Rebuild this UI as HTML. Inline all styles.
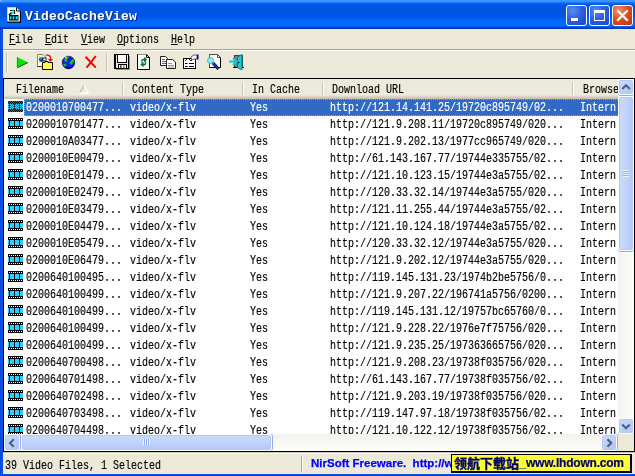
<!DOCTYPE html>
<html lang="en"><head><meta charset="utf-8"><title>VideoCacheView</title>
<style>
html,body{margin:0;padding:0;}
body{width:635px;height:476px;overflow:hidden;background:#ece9d8;font-family:"Liberation Mono","Noto Sans CJK SC",monospace;font-size:12px;line-height:12px;color:#000;}
i{-webkit-text-stroke:.15px currentColor;font-style:normal;display:inline-block;white-space:nowrap;transform:scaleX(.8333);transform-origin:0 50%;}
u{text-decoration:none;position:relative;}u:after{content:'';position:absolute;left:0;right:-1px;top:11px;height:1px;background:#000;}
#win{will-change:transform;position:absolute;left:0;top:0;width:635px;height:476px;overflow:hidden;background:#ece9d8;}
#title{position:absolute;left:0;top:0;width:635px;height:29px;
background:linear-gradient(to bottom,#3d96ff 0.5px,#3a92fe 1.5px,#1878fb 2.5px,#0866f2 3.5px,#015ae8 4.5px,#0055e3 5.5px,#0055e3 6.5px,#0055e3 7.5px,#0055e3 8.5px,#0055e3 9.5px,#0055e3 10.5px,#0055e3 11.5px,#0055e3 12.5px,#0055e3 13.5px,#0055e3 14.5px,#0055e3 15.5px,#0057e6 16.5px,#005aec 17.5px,#005ef2 18.5px,#0062f7 19.5px,#0265fa 20.5px,#0468fd 21.5px,#0468fd 22.5px,#0468fd 23.5px,#0468fd 24.5px,#0468fd 25.5px,#025fee 26.5px,#0148cc 27.5px,#0036b0 28.5px);}
#appicon{position:absolute;left:7px;top:7px;}
#ttext{-webkit-text-stroke:.45px #fff;position:absolute;left:25px;top:10px;font-weight:bold;font-size:13px;line-height:13px;color:#fff;text-shadow:1px 1px 0 #0a2a80;}
#ttext i{-webkit-text-stroke:0;transform:none;letter-spacing:.2px;}
.tb{position:absolute;top:5px;width:21px;height:21px;box-sizing:border-box;border:1px solid #fff;border-radius:3px;
background:radial-gradient(circle at 30% 25%,#5a8cf0 0%,#2d5fe0 45%,#1a48c8 100%);}
.tb.min{left:566px}.tb.max{left:589px}.tb.close{left:612px;background:radial-gradient(circle at 30% 25%,#f0906a 0%,#dc4a22 50%,#b83210 100%);}
.tb.min b{position:absolute;left:4px;top:12px;width:7px;height:3px;background:#fff;}
.tb.max b{position:absolute;left:4px;top:4px;width:9px;height:7px;border:1px solid #fff;border-top-width:3px;}
.tb svg{position:absolute;left:-1px;top:-1px;}
#menu{position:absolute;left:3px;top:29px;width:632px;height:20px;}
#menu span{position:absolute;top:5px;}
#menu span{margin-left:-3px;}
#etch{position:absolute;left:3px;top:49px;width:632px;height:1px;background:#aca899;border-bottom:1px solid #fff;}
#toolbar{position:absolute;left:0;top:51px;width:635px;height:27px;}
#toolbar .grip{position:absolute;left:6px;top:2px;width:1px;height:19px;background:#c2bfae;border-right:1px solid #f8f7f0;}
#toolbar .sep{position:absolute;left:106px;top:2px;width:1px;height:19px;background:#c5c2b2;border-right:1px solid #f8f7f0;}
#toolbar svg.ic{position:absolute;top:3px;}
#list{position:absolute;left:3px;top:78px;width:630px;height:372px;border:1px solid #000;background:#fff;overflow:hidden;}
#header{position:absolute;left:0;top:0;width:630px;height:20px;background:linear-gradient(to bottom,#ebeadb 0,#ebeadb 16px,#e2dece 17px,#d6d2c2 18px,#cbc7b8 19px,#c5c1b0 20px);}
#header .h{position:absolute;top:5px;}
#header .hs{position:absolute;top:3px;width:1px;height:13px;background:#c7c5b2;border-right:1px solid #fff;}
#sort{position:absolute;left:75px;top:6px;}
#rows{position:absolute;left:0;top:0;width:614px;height:355px;overflow:hidden;}
.row{position:absolute;left:0;width:614px;height:17px;}
.film{position:absolute;left:4px;top:2px;width:15px;height:11px;background:linear-gradient(#000,#000) 1px 3px/1px 5px no-repeat,linear-gradient(#000,#000) 6px 3px/1px 5px no-repeat,linear-gradient(#000,#000) 11px 3px/1px 5px no-repeat,linear-gradient(#33ccff,#33ccff) 0 3px/15px 5px no-repeat,repeating-linear-gradient(to right,#000 0,#000 1px,#fff 1px,#fff 2px) 0 1px/14px 1px no-repeat,repeating-linear-gradient(to right,#000 0,#000 1px,#fff 1px,#fff 2px) 0 9px/14px 1px no-repeat,#000;}
.c{position:absolute;top:3px;height:13px;overflow:hidden;}
.c1{left:22px;width:96px}.c2{left:126px}.c3{left:246px}.c4{left:326px;width:240px}.c5{left:576px;width:36px}
.row.sel{color:#fff;}
.row.sel:before{content:"";position:absolute;left:20px;top:0;width:594px;height:17px;box-sizing:border-box;background:#316ac5;border:1px dotted #d8993a;border-right:0;}
.row.sel:after{content:'';position:absolute;left:4px;top:2px;width:15px;height:11px;background-image:conic-gradient(#316ac5 25%,transparent 0 50%,#316ac5 0 75%,transparent 0);background-size:2px 2px;background-position:1px 0;}
#vs{position:absolute;left:614px;top:0;width:16px;height:355px;background:linear-gradient(to right,#f3f1ec,#fefefb);}
#hs{position:absolute;left:0;top:355px;width:614px;height:17px;background:linear-gradient(to bottom,#f3f1ec,#fefefb);}
#corner{position:absolute;left:614px;top:355px;width:16px;height:17px;background:#ece9d8;}
.sb{position:absolute;width:16px;height:16px;box-sizing:border-box;border:1px solid #fff;border-radius:3px;background:linear-gradient(135deg,#cadbfd 0%,#bdd0fb 50%,#aec4f8 100%);box-shadow:inset 0 0 0 1px #b4c8f6;}
.sb svg{position:absolute;left:-1px;top:-1px;}
.sb.up{left:0;top:0;box-shadow:inset 0 0 0 1px #b4c8f6,0 1px 0 #86a7e8}.sb.down{left:0;top:339px}
.sb.left{left:0;top:0;height:17px}.sb.right{left:597px;top:0;height:17px}.sb.left svg,.sb.right svg{top:-.5px}
.thumb{position:absolute;box-sizing:border-box;border:1px solid #fff;border-radius:3px;box-shadow:inset 0 0 0 1px #b4c8f6;}
.thumb.v{left:0;top:17px;width:16px;height:155px;background:linear-gradient(to right,#cbdafd 0%,#c2d3fc 50%,#b3c8f8 100%);}
.thumb.h{left:17px;top:0;width:251px;height:17px;background:linear-gradient(to bottom,#cbdafd 0%,#c2d3fc 50%,#b3c8f8 100%);}
.thumb.v .gr{position:absolute;left:4px;top:73px;width:6px;height:7px;background:repeating-linear-gradient(to bottom,#eef4fe 0,#eef4fe 1px,#8cb0f8 1px,#8cb0f8 2px);}
.thumb.h .gr{position:absolute;top:4px;left:121px;height:6px;width:7px;background:repeating-linear-gradient(to right,#eef4fe 0,#eef4fe 1px,#8cb0f8 1px,#8cb0f8 2px);}
#status{position:absolute;left:3px;top:452px;width:632px;height:22px;background:linear-gradient(to bottom,#c9c6b5 0,#c9c6b5 1px,#f8f7f1 1px,#f8f7f1 2px,#ece9d8 2px);}
#st1{position:absolute;left:2px;top:8px;}
#stsep{position:absolute;left:298px;top:4px;width:1px;height:16px;background:#aca899;border-right:1px solid #fff;}
#st2{-webkit-text-stroke:.25px #0000ff;position:absolute;left:308px;top:4px;font-family:"Liberation Sans",sans-serif;font-weight:bold;font-size:11.5px;line-height:14px;color:#0000ff;white-space:nowrap;}
#wm{position:absolute;left:451px;top:454px;width:181px;height:19px;box-sizing:border-box;border:1px solid #000;border-right-width:2px;border-bottom-width:2px;background:#ffff33;white-space:nowrap;overflow:hidden;font-weight:bold;}
#wm .cn{-webkit-text-stroke:.35px #00006a;position:absolute;left:2px;top:1px;font-family:"Liberation Sans","Noto Sans CJK SC",sans-serif;font-size:13px;line-height:15px;color:#00006a;}
#wm .en{-webkit-text-stroke:.2px #00006a;position:absolute;left:67.5px;top:1px;font-family:"Liberation Sans",sans-serif;font-size:12px;line-height:15px;letter-spacing:-.22px;color:#00006a;}
#bl{position:absolute;left:0;top:29px;width:3px;height:447px;background:linear-gradient(to right,#0a3edc,#0855e8 50%,#0450d8);}
#bb{position:absolute;left:0;top:474px;width:635px;height:2px;background:linear-gradient(to bottom,#0450d8,#0855e8 40%,#0338b8);}
#tl{position:absolute;left:0;top:0;width:2px;height:2px;background:radial-gradient(circle at 0 0,#9fc4ff 0,#5a9cff 70%,transparent 100%);}
#vs .sb,#vs .thumb{box-shadow:inset 0 0 0 1px #b4c8f6,0 1px 0 #8eabea;}
#hs .sb,#hs .thumb{box-shadow:inset 0 0 0 1px #b4c8f6,1px 0 0 #8eabea;}

</style></head>
<body>
<div id="win">
<div id="title">
  <svg id="appicon" width="14" height="16" viewBox="0 0 14 16">
    <path d="M0.5 0.5H9.5L13 4V15H0.5Z" fill="#fff"/>
    <path d="M0.5 15V0.5H9.5" fill="none" stroke="#d9cfa4"/>
    <path d="M0 15.2H13.5V4" fill="none" stroke="#000" stroke-width="1.2"/>
    <path d="M9.5 0.5V4H13.2" fill="none" stroke="#000"/>
    <path d="M3 3.5H7.5V7" fill="none" stroke="#000" stroke-width="1.2"/>
    <path d="M7 3.8L3.8 8" stroke="#00e8f0" stroke-width="1.8"/>
    <path d="M4.5 3H7" stroke="#00e8f0" stroke-width="1"/>
    <rect x="2" y="8" width="9.5" height="5.5" fill="#000"/>
    <rect x="2.8" y="9.3" width="1.7" height="3" fill="#00e8f0"/><rect x="5.6" y="9.3" width="1.8" height="3" fill="#00e8f0"/><rect x="8.6" y="9.3" width="2.2" height="3" fill="#00e8f0"/>
    <path d="M2 8L4.5 5.5" stroke="#000" stroke-width="1.2"/>
  </svg>
  <span id="ttext"><i>VideoCacheView</i></span>
  <div class="tb min"><b></b></div>
  <div class="tb max"><b></b></div>
  <div class="tb close"><svg width="21" height="21" viewBox="0 0 21 21"><path d="M6 6L15 15M15 6L6 15" stroke="#fff" stroke-width="2.2" stroke-linecap="square"/></svg></div>
</div>
<div id="menu">
  <span style="left:9px"><i><u>F</u>ile</i></span>
  <span style="left:45px"><i><u>E</u>dit</i></span>
  <span style="left:81px"><i><u>V</u>iew</i></span>
  <span style="left:117px"><i><u>O</u>ptions</i></span>
  <span style="left:171px"><i><u>H</u>elp</i></span>
</div>
<div id="etch"></div>
<div id="toolbar">
  <div class="grip"></div>
  <div class="sep"></div>
  <svg class="ic" style="left:14px" width="16" height="16" viewBox="0 0 16 16"><path d="M3 3L14 8.5L3 14Z" fill="#00e400"/><path d="M3.2 13.8L14 8.5" stroke="#045a04" stroke-width="1" fill="none"/><path d="M3.4 3.2V13.8" stroke="#12a012" stroke-width="1" fill="none"/></svg>
  <svg class="ic" style="left:37px" width="16" height="16" viewBox="0 0 16 16"><path d="M0.5 0.5H6L8.5 3V12.5H0.5Z" fill="#fff" stroke="#808080"/><path d="M0 12.5H6" stroke="#404040"/><g fill="#e8d800"><rect x="2" y="2" width="1" height="1"/><rect x="5" y="1.5" width="1" height="1"/><rect x="1.5" y="8" width="1" height="1"/><rect x="3.5" y="10" width="1" height="1"/><rect x="6" y="9" width="1" height="1"/></g><circle cx="4.3" cy="5.6" r="2.4" fill="#1030d0"/><path d="M2.5 4.5L4.8 3.4L5.5 5L4 6.2Z" fill="#20b020"/><rect x="6" y="4" width="3" height="3" fill="#fff" stroke="#000" stroke-width=".8"/><path d="M9 1.2C12.5 0.5 14 2.5 13.5 6" stroke="#ff0000" stroke-width="1.3" fill="none"/><path d="M11 5H16L13.5 8Z" fill="#ff0000"/><path d="M5.5 8.5H8V7.5H11V8.5H15.5V15.5H5.5Z" fill="#ffff50" stroke="#000"/></svg>
  <svg class="ic" style="left:60px" width="16" height="16" viewBox="0 0 16 16"><circle cx="8.5" cy="8.5" r="6.3" fill="#0a18e8" stroke="#202050" stroke-width=".8"/><path d="M4 5.5L6.5 3L9.5 3.2L7 5.5L7.5 7.5L5 8Z" fill="#18c018"/><path d="M9 9L13 4.5L14.3 7L11.5 11Z" fill="#18c018"/><path d="M3 10L6 9.5L6.5 12L4.5 12.8Z" fill="#18c018"/><path d="M5 3.8L6.8 2.8" stroke="#fff" stroke-width="1"/><path d="M3.6 12.3A6.3 6.3 0 0 0 13.4 12.3Q8.5 14 3.6 12.3Z" fill="#000060"/></svg>
  <svg class="ic" style="left:83px" width="16" height="16" viewBox="0 0 16 16"><path d="M2.5 2.8L12.8 13.6M12.8 2L3.6 13.6" stroke="#ff0000" stroke-width="2" fill="none"/></svg>
  <svg class="ic" style="left:114px" width="16" height="16" viewBox="0 0 16 16"><path d="M15.5 2V15.5H2" stroke="#909090" fill="none"/><rect x="0.5" y="0.5" width="14" height="14" fill="#ece9d8" stroke="#000"/><path d="M1.5 1V14" stroke="#000"/><rect x="3.5" y="0.5" width="9" height="8" fill="#fff" stroke="#000" stroke-width="1"/><rect x="13" y="1.5" width="1" height="1" fill="#fff"/><rect x="4.5" y="10.5" width="8" height="4" fill="#f4f2e8" stroke="#000"/><rect x="6" y="11.2" width="1.6" height="3" fill="#505050"/><rect x="9" y="11.2" width="1.6" height="3" fill="#909090"/></svg>
  <svg class="ic" style="left:137px" width="16" height="16" viewBox="0 0 16 16"><path d="M0.5 0.5H9.5L12.5 3.5V15.5H0.5Z" fill="#fff" stroke="#000"/><path d="M1 0.5H9.5" stroke="#909090"/><path d="M9.5 0.5V3.5H12.5" fill="none" stroke="#000"/><path d="M4.2 7.2C4.2 5.2 5.5 4.6 7 4.8V3L10.2 5.6L7 8.2V6.4C6 6.2 5.6 6.6 5.6 7.6Z" fill="#087808"/><path d="M9.3 9C9.3 11 8 11.6 6.5 11.4V13.2L3.3 10.6L6.5 8V9.8C7.5 10 7.9 9.6 7.9 8.6Z" fill="#087808"/><path d="M4.9 7.4V9.2M8.6 8.8V7" stroke="#1088b8" stroke-width="1.4"/></svg>
  <svg class="ic" style="left:160px" width="16" height="16" viewBox="0 0 16 16"><path d="M0.5 2.5H5.5L7.5 4.5V11.5H0.5Z" fill="#fff" stroke="#202020"/><path d="M2 5.5H5M2 7.5H6M2 9.5H6" stroke="#505050" stroke-width=".9"/><path d="M6.5 5.5H12.5L15.5 8V14.5H6.5Z" fill="#fff" stroke="#202020"/><path d="M8 9.5H12M8 11.5H14M8 13H14" stroke="#909090" stroke-width=".9"/></svg>
  <svg class="ic" style="left:183px" width="16" height="16" viewBox="0 0 16 16"><rect x="0.5" y="4.5" width="12" height="10" fill="#fff" stroke="#000"/><path d="M2 7L5 4L8 7L11 3" stroke="#000" stroke-width=".9" fill="none"/><path d="M8 3L11 1H14V5H11L8.5 6Z" fill="#fff" stroke="#404040" stroke-width=".8"/><rect x="14" y="0.5" width="1.5" height="5" fill="#0000c0"/><path d="M2 9.5H4.5M6 9.5H11M2 12.5H4.5M6 12.5H11" stroke="#000" stroke-width="1"/></svg>
  <svg class="ic" style="left:206px" width="16" height="16" viewBox="0 0 16 16"><path d="M3.5 0.5H11.5L14.5 3.5V13.5H3.5Z" fill="#fff" stroke="#505050"/><path d="M14.5 3.5V13.5H3.5" stroke="#000" fill="none"/><path d="M11.5 0.5V3.5H14.5" stroke="#505050" fill="none"/><circle cx="4.5" cy="6.5" r="3" fill="#80f0ff" stroke="#40a0c0" stroke-width=".8"/><path d="M7 9L12.5 15" stroke="#000" stroke-width="3"/><path d="M7 9L12.3 14.7" stroke="#0040ff" stroke-width="1.6"/></svg>
  <svg class="ic" style="left:229px" width="16" height="16" viewBox="0 0 16 16"><rect x="5.5" y="1.5" width="8" height="12" fill="#808080" stroke="#404040"/><path d="M4 13.5H15" stroke="#000"/><path d="M8.5 3L13 0.5V16L8.5 13.5Z" fill="#10d0d0" stroke="#006868" stroke-width=".8"/><path d="M0 7.5H7" stroke="#10c8d8" stroke-width="2"/><path d="M4 4L7.8 7.5L4 11" stroke="#10c8d8" stroke-width="2" fill="none"/><circle cx="9.8" cy="8.5" r=".8" fill="#000"/></svg>

</div>
<div id="list">
  <div id="header">
    <span class="h" style="left:12px"><i>Filename</i></span>
    <svg id="sort" width="10" height="9" viewBox="0 0 10 9"><path d="M5 0.5L0.7 8" stroke="#aca899" fill="none"/><path d="M5 0.5L9.3 8.2H0.5" stroke="#fff" stroke-width="1.4" fill="none"/></svg>
    <span class="h" style="left:128px"><i>Content Type</i></span>
    <span class="h" style="left:248px"><i>In Cache</i></span>
    <span class="h" style="left:328px"><i>Download URL</i></span>
    <span class="h" style="left:579px"><i>Browse</i></span>
    <div class="hs" style="left:118px"></div>
    <div class="hs" style="left:238px"></div>
    <div class="hs" style="left:318px"></div>
    <div class="hs" style="left:568px"></div>
  </div>
  <div id="rows">
<div class="row sel" style="top:20px"><b class="film"></b><span class="c c1"><i>0200010700477...</i></span><span class="c c2"><i>video/x-flv</i></span><span class="c c3"><i>Yes</i></span><span class="c c4"><i>http://121.14.141.25/19720c895749/02...</i></span><span class="c c5"><i>Intern</i></span></div>
<div class="row" style="top:37px"><b class="film"></b><span class="c c1"><i>0200010701477...</i></span><span class="c c2"><i>video/x-flv</i></span><span class="c c3"><i>Yes</i></span><span class="c c4"><i>http://121.9.208.11/19720c895749/020...</i></span><span class="c c5"><i>Intern</i></span></div>
<div class="row" style="top:54px"><b class="film"></b><span class="c c1"><i>0200010A03477...</i></span><span class="c c2"><i>video/x-flv</i></span><span class="c c3"><i>Yes</i></span><span class="c c4"><i>http://121.9.202.13/1977cc965749/020...</i></span><span class="c c5"><i>Intern</i></span></div>
<div class="row" style="top:71px"><b class="film"></b><span class="c c1"><i>0200010E00479...</i></span><span class="c c2"><i>video/x-flv</i></span><span class="c c3"><i>Yes</i></span><span class="c c4"><i>http://61.143.167.77/19744e335755/02...</i></span><span class="c c5"><i>Intern</i></span></div>
<div class="row" style="top:88px"><b class="film"></b><span class="c c1"><i>0200010E01479...</i></span><span class="c c2"><i>video/x-flv</i></span><span class="c c3"><i>Yes</i></span><span class="c c4"><i>http://121.10.123.15/19744e3a5755/02...</i></span><span class="c c5"><i>Intern</i></span></div>
<div class="row" style="top:105px"><b class="film"></b><span class="c c1"><i>0200010E02479...</i></span><span class="c c2"><i>video/x-flv</i></span><span class="c c3"><i>Yes</i></span><span class="c c4"><i>http://120.33.32.14/19744e3a5755/020...</i></span><span class="c c5"><i>Intern</i></span></div>
<div class="row" style="top:122px"><b class="film"></b><span class="c c1"><i>0200010E03479...</i></span><span class="c c2"><i>video/x-flv</i></span><span class="c c3"><i>Yes</i></span><span class="c c4"><i>http://121.11.255.44/19744e3a5755/02...</i></span><span class="c c5"><i>Intern</i></span></div>
<div class="row" style="top:139px"><b class="film"></b><span class="c c1"><i>0200010E04479...</i></span><span class="c c2"><i>video/x-flv</i></span><span class="c c3"><i>Yes</i></span><span class="c c4"><i>http://121.10.124.18/19744e3a5755/02...</i></span><span class="c c5"><i>Intern</i></span></div>
<div class="row" style="top:156px"><b class="film"></b><span class="c c1"><i>0200010E05479...</i></span><span class="c c2"><i>video/x-flv</i></span><span class="c c3"><i>Yes</i></span><span class="c c4"><i>http://120.33.32.12/19744e3a5755/020...</i></span><span class="c c5"><i>Intern</i></span></div>
<div class="row" style="top:173px"><b class="film"></b><span class="c c1"><i>0200010E06479...</i></span><span class="c c2"><i>video/x-flv</i></span><span class="c c3"><i>Yes</i></span><span class="c c4"><i>http://121.9.202.12/19744e3a5755/020...</i></span><span class="c c5"><i>Intern</i></span></div>
<div class="row" style="top:190px"><b class="film"></b><span class="c c1"><i>0200640100495...</i></span><span class="c c2"><i>video/x-flv</i></span><span class="c c3"><i>Yes</i></span><span class="c c4"><i>http://119.145.131.23/1974b2be5756/0...</i></span><span class="c c5"><i>Intern</i></span></div>
<div class="row" style="top:207px"><b class="film"></b><span class="c c1"><i>0200640100499...</i></span><span class="c c2"><i>video/x-flv</i></span><span class="c c3"><i>Yes</i></span><span class="c c4"><i>http://121.9.207.22/196741a5756/0200...</i></span><span class="c c5"><i>Intern</i></span></div>
<div class="row" style="top:224px"><b class="film"></b><span class="c c1"><i>0200640100499...</i></span><span class="c c2"><i>video/x-flv</i></span><span class="c c3"><i>Yes</i></span><span class="c c4"><i>http://119.145.131.12/19757bc65760/0...</i></span><span class="c c5"><i>Intern</i></span></div>
<div class="row" style="top:241px"><b class="film"></b><span class="c c1"><i>0200640100499...</i></span><span class="c c2"><i>video/x-flv</i></span><span class="c c3"><i>Yes</i></span><span class="c c4"><i>http://121.9.228.22/1976e7f75756/020...</i></span><span class="c c5"><i>Intern</i></span></div>
<div class="row" style="top:258px"><b class="film"></b><span class="c c1"><i>0200640100499...</i></span><span class="c c2"><i>video/x-flv</i></span><span class="c c3"><i>Yes</i></span><span class="c c4"><i>http://121.9.235.25/197363665756/020...</i></span><span class="c c5"><i>Intern</i></span></div>
<div class="row" style="top:275px"><b class="film"></b><span class="c c1"><i>0200640700498...</i></span><span class="c c2"><i>video/x-flv</i></span><span class="c c3"><i>Yes</i></span><span class="c c4"><i>http://121.9.208.23/19738f035756/020...</i></span><span class="c c5"><i>Intern</i></span></div>
<div class="row" style="top:292px"><b class="film"></b><span class="c c1"><i>0200640701498...</i></span><span class="c c2"><i>video/x-flv</i></span><span class="c c3"><i>Yes</i></span><span class="c c4"><i>http://61.143.167.77/19738f035756/02...</i></span><span class="c c5"><i>Intern</i></span></div>
<div class="row" style="top:309px"><b class="film"></b><span class="c c1"><i>0200640702498...</i></span><span class="c c2"><i>video/x-flv</i></span><span class="c c3"><i>Yes</i></span><span class="c c4"><i>http://121.9.203.19/19738f035756/020...</i></span><span class="c c5"><i>Intern</i></span></div>
<div class="row" style="top:326px"><b class="film"></b><span class="c c1"><i>0200640703498...</i></span><span class="c c2"><i>video/x-flv</i></span><span class="c c3"><i>Yes</i></span><span class="c c4"><i>http://119.147.97.18/19738f035756/02...</i></span><span class="c c5"><i>Intern</i></span></div>
<div class="row" style="top:343px"><b class="film"></b><span class="c c1"><i>0200640704498...</i></span><span class="c c2"><i>video/x-flv</i></span><span class="c c3"><i>Yes</i></span><span class="c c4"><i>http://121.10.122.12/19738f035756/02...</i></span><span class="c c5"><i>Intern</i></span></div>
  </div>
  <div id="vs">
    <div class="sb up"><svg width="16" height="16" viewBox="0 0 16 16"><path d="M4.2 10L8 6.2L11.8 10" stroke="#4d6185" stroke-width="2.2" fill="none"/></svg></div>
    <div class="thumb v"><div class="gr"></div></div>
    <div class="sb down"><svg width="16" height="16" viewBox="0 0 16 16"><path d="M4.2 6.5L8 10.3L11.8 6.5" stroke="#4d6185" stroke-width="2.2" fill="none"/></svg></div>
  </div>
  <div id="hs">
    <div class="sb left"><svg width="16" height="16" viewBox="0 0 16 16"><path d="M9.8 4.2L6 8L9.8 11.8" stroke="#4d6185" stroke-width="2.2" fill="none"/></svg></div>
    <div class="thumb h"><div class="gr"></div></div>
    <div class="sb right"><svg width="16" height="16" viewBox="0 0 16 16"><path d="M6.4 4.2L10.2 8L6.4 11.8" stroke="#4d6185" stroke-width="2.2" fill="none"/></svg></div>
  </div>
  <div id="corner"></div>
</div>
<div id="status">
  <span id="st1"><i>39 Video Files, 1 Selected</i></span>
  <div id="stsep"></div>
  <span id="st2">NirSoft Freeware.&nbsp; http://w</span>
</div>
<div id="wm"><span class="cn">领航下载站</span><span class="en">_www.lhdown.com</span></div>
<div id="bl"></div><div id="bb"></div><div id="tl"></div>
</div>
</body></html>
